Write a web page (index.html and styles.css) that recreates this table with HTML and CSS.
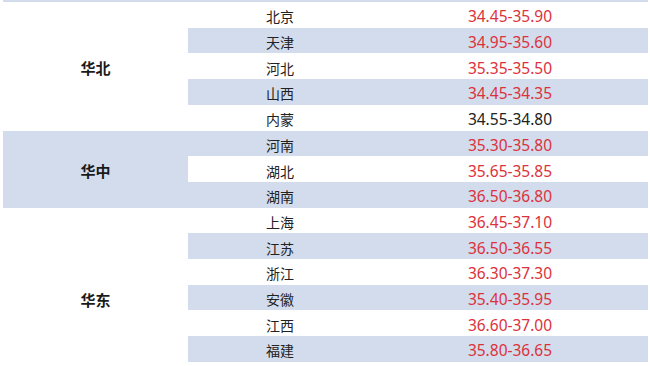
FILE: index.html
```html
<!DOCTYPE html>
<html lang="zh">
<head>
<meta charset="utf-8">
<link rel="stylesheet" href="styles.css">
</head>
<body>
<div class="sheet">
  <div class="strip"></div>
  <div class="grid">
    <div class="region r1">华北</div>
    <div class="city">北京</div><div class="val red">34.45-35.90</div>
    <div class="city alt">天津</div><div class="val red alt">34.95-35.60</div>
    <div class="city">河北</div><div class="val red">35.35-35.50</div>
    <div class="city alt">山西</div><div class="val red alt">34.45-34.35</div>
    <div class="city">内蒙</div><div class="val">34.55-34.80</div>

    <div class="region r2 alt">华中</div>
    <div class="city alt">河南</div><div class="val red alt">35.30-35.80</div>
    <div class="city">湖北</div><div class="val red">35.65-35.85</div>
    <div class="city alt">湖南</div><div class="val red alt">36.50-36.80</div>

    <div class="region r3">华东</div>
    <div class="city">上海</div><div class="val red">36.45-37.10</div>
    <div class="city alt">江苏</div><div class="val red alt">36.50-36.55</div>
    <div class="city">浙江</div><div class="val red">36.30-37.30</div>
    <div class="city alt">安徽</div><div class="val red alt">35.40-35.95</div>
    <div class="city">江西</div><div class="val red">36.60-37.00</div>
    <div class="city alt">福建</div><div class="val red alt">35.80-36.65</div>
    <div class="city"></div><div class="val"></div>
  </div>
</div>
</body>
</html>
```

FILE: styles.css
```css
html, body {
  margin: 0;
  padding: 0;
  background: #ffffff;
  overflow: hidden;
}

.sheet {
  width: 645px;
  margin-left: 3px;
}

.strip {
  height: 2px;
  background: #d2dcec;
}

.grid {
  display: grid;
  grid-template-columns: 185px 184px 1fr;
  grid-template-rows: repeat(15, 25.714px);
}

.grid > div {
  display: flex;
  align-items: center;
  justify-content: center;
  padding-top: 3px;
  box-sizing: border-box;
}

.alt {
  background: #d2dcec;
}

.region {
  grid-column: 1;
  font-family: "Noto Sans CJK SC", sans-serif;
  font-weight: 700;
  font-size: 15px;
  color: #1a1a1a;
}

.r1 { grid-row: 1 / span 5; }
.r2 { grid-row: 6 / span 3; }
.r3 { grid-row: 9 / span 7; }

.city {
  grid-column: 2;
  font-family: "Noto Sans CJK SC", sans-serif;
  font-size: 14px;
  color: #222222;
}

.val {
  grid-column: 3;
  font-family: "Noto Sans", "Noto Sans CJK SC", sans-serif;
  font-size: 15.5px;
  color: #222222;
}

.val.red {
  color: #dc323c;
}
```
